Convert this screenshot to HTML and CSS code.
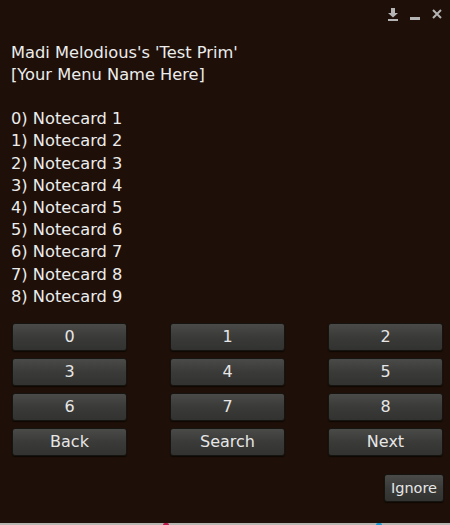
FILE: index.html
```html
<!DOCTYPE html>
<html lang="en">
<head>
<meta charset="UTF-8">
<title>Dialog</title>
<link rel="stylesheet" href="styles.css">
</head>
<body>
<div class="dialog">
  <div class="titlebar">
    <!-- dock / minimize / close -->
    <svg class="tb-icon" width="12" height="14" viewBox="0 0 12 14">
      <path d="M4 1 H8 V6 H11 L6 10.5 L1 6 H4 Z" fill="#b4b4b4"/>
      <rect x="1" y="12" width="10" height="2" fill="#b4b4b4"/>
    </svg>
    <svg class="tb-icon" width="12" height="14" viewBox="0 0 12 14">
      <rect x="1" y="10" width="10" height="3" fill="#b4b4b4"/>
    </svg>
    <svg class="tb-icon" width="12" height="14" viewBox="0 0 12 14">
      <path d="M2 3 L10 11 M10 3 L2 11" stroke="#b4b4b4" stroke-width="2"/>
    </svg>
  </div>

  <div class="message">
    <div>Madi Melodious's 'Test Prim'</div>
    <div>[Your Menu Name Here]</div>
    <div>&nbsp;</div>
    <div>0) Notecard 1</div>
    <div>1) Notecard 2</div>
    <div>2) Notecard 3</div>
    <div>3) Notecard 4</div>
    <div>4) Notecard 5</div>
    <div>5) Notecard 6</div>
    <div>6) Notecard 7</div>
    <div>7) Notecard 8</div>
    <div>8) Notecard 9</div>
  </div>

  <div class="buttons">
    <button class="btn">0</button>
    <button class="btn">1</button>
    <button class="btn">2</button>
    <button class="btn">3</button>
    <button class="btn">4</button>
    <button class="btn">5</button>
    <button class="btn">6</button>
    <button class="btn">7</button>
    <button class="btn">8</button>
    <button class="btn">Back</button>
    <button class="btn">Search</button>
    <button class="btn">Next</button>
  </div>

  <div class="footer">
    <button class="btn btn-small">Ignore</button>
  </div>
</div>
<div class="taskbar">
  <span class="mark mark-pink"></span>
  <span class="mark mark-blue"></span>
</div>
</body>
</html>
```

FILE: styles.css
```css
html, body {
  margin: 0;
  padding: 0;
  background: #1e1008;
}

.dialog {
  height: 523px;
  background: #1e1008;
  color: #ececec;
  font-family: "DejaVu Sans", sans-serif;
  font-size: 16px;
  display: flex;
  flex-direction: column;
}

.titlebar {
  height: 24px;
  display: flex;
  justify-content: flex-end;
  align-items: center;
  gap: 10px;
  padding: 2px 7px 0 0;
}

.tb-icon {
  display: block;
}

.message {
  padding: 15.5px 0 0 11px;
  font-size: 16.25px;
  line-height: 22.2px;
}

.buttons {
  display: grid;
  grid-template-columns: repeat(3, 115px);
  justify-content: space-between;
  row-gap: 7px;
  padding: 15.5px 7px 0 12px;
}

.btn {
  height: 28px;
  margin: 0;
  padding: 0;
  border: 1px solid #161410;
  border-radius: 3px;
  background: linear-gradient(#4a4a48, #3a3a38 50%, #323230);
  box-shadow: 0 1px 1px #0e0803;
  color: #e6e6e6;
  font-family: "DejaVu Sans", sans-serif;
  font-size: 16px;
  line-height: 26px;
}

.footer {
  display: flex;
  justify-content: flex-end;
  padding: 18px 6px 0 0;
}

.btn-small {
  width: 60px;
  font-size: 14.5px;
}

.taskbar {
  height: 2px;
  background: #b8b6b2;
  position: relative;
}

.mark {
  position: absolute;
  top: 0;
  width: 6px;
  height: 2px;
  border-radius: 3px 3px 0 0;
}

.mark-pink {
  left: 163px;
  background: #c0164c;
}

.mark-blue {
  left: 376px;
  background: #1a9ad6;
}
```
